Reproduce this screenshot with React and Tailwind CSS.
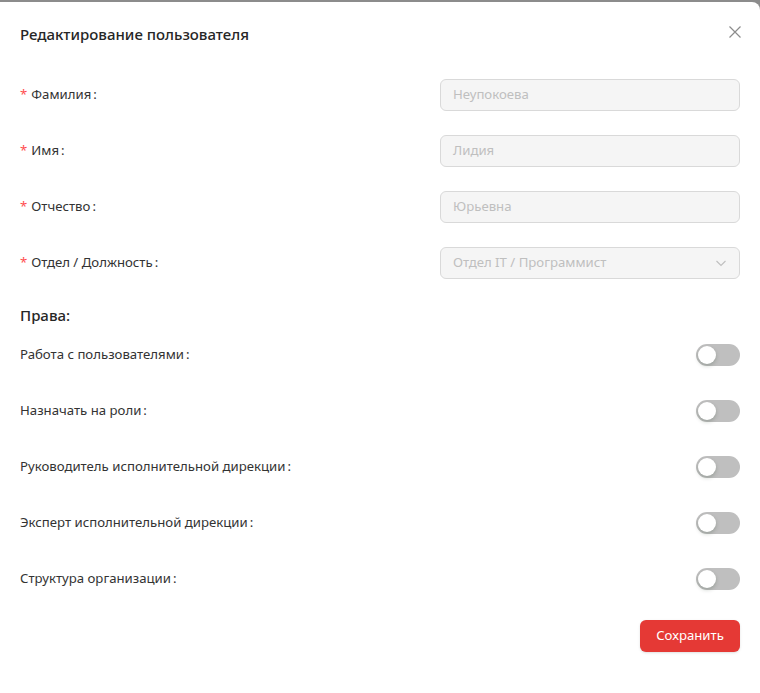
import React from "react";

const fields = [
  { label: "Фамилия", value: "Неупокоева" },
  { label: "Имя", value: "Лидия" },
  { label: "Отчество", value: "Юрьевна" },
  { label: "Отдел / Должность", value: "Отдел IT / Программист", select: true },
];

const rights = [
  "Работа с пользователями",
  "Назначать на роли",
  "Руководитель исполнительной дирекции",
  "Эксперт исполнительной дирекции",
  "Структура организации",
];

function Toggle() {
  return (
    <div className="flex h-[22px] w-[44px] items-center rounded-full bg-[#bfbfbf] p-[2px]">
      <div className="h-[18px] w-[18px] rounded-full bg-white shadow-[0_2px_4px_rgba(0,35,11,0.2)]" />
    </div>
  );
}

export default function App() {
  return (
    <div className="h-[693px] w-[760px] bg-[#8c8c8c] pt-[2px] font-['Noto_Sans',sans-serif]">
      <div className="h-full rounded-tr-[8px] bg-white px-5">
        <div className="flex h-[62px] items-center justify-between pt-[2px]">
          <h1 className="text-[15px] font-medium text-[#262626]">Редактирование пользователя</h1>
          <button className="mr-[-2px] mt-[-4px] text-[#8c8c8c]">
            <svg width="14" height="14" viewBox="0 0 14 14" fill="none" stroke="currentColor" strokeWidth="1.2">
              <path d="M1.5 1.5L12.5 12.5M12.5 1.5L1.5 12.5" />
            </svg>
          </button>
        </div>

        <div className="mt-[15px] space-y-6">
          {fields.map((f) => (
            <div key={f.label} className="flex h-8 items-center">
              <label className="flex-1 text-[13.2px] text-[#333]">
                <span className="mr-1 text-[#ff4d4f]">*</span>
                {f.label}
                <span className="ml-[2px]">:</span>
              </label>
              <div className="flex h-8 w-[300px] items-center justify-between rounded-md border border-[#d9d9d9] bg-[#f5f5f5] px-3 text-[13.2px] text-[#bfbfbf]">
                <span>{f.value}</span>
                {f.select && (
                  <svg width="12" height="12" viewBox="0 0 12 12" fill="none" stroke="#bfbfbf" strokeWidth="1.1">
                    <path d="M1.5 4L6 8.5L10.5 4" />
                  </svg>
                )}
              </div>
            </div>
          ))}
        </div>

        <h2 className="mt-[25px] text-[15px] font-medium leading-[22px] text-[#262626]">Права:</h2>

        <div className="mt-[13px] space-y-6">
          {rights.map((r) => (
            <div key={r} className="flex h-8 items-center justify-between">
              <span className="text-[13.2px] text-[#333]">
                {r}
                <span className="ml-[2px]">:</span>
              </span>
              <Toggle />
            </div>
          ))}
        </div>

        <div className="mt-[25px] flex justify-end">
          <button className="h-8 w-[100px] rounded-md bg-[#e53935] text-[13.2px] text-white shadow-sm">Сохранить</button>
        </div>
      </div>
    </div>
  );
}
